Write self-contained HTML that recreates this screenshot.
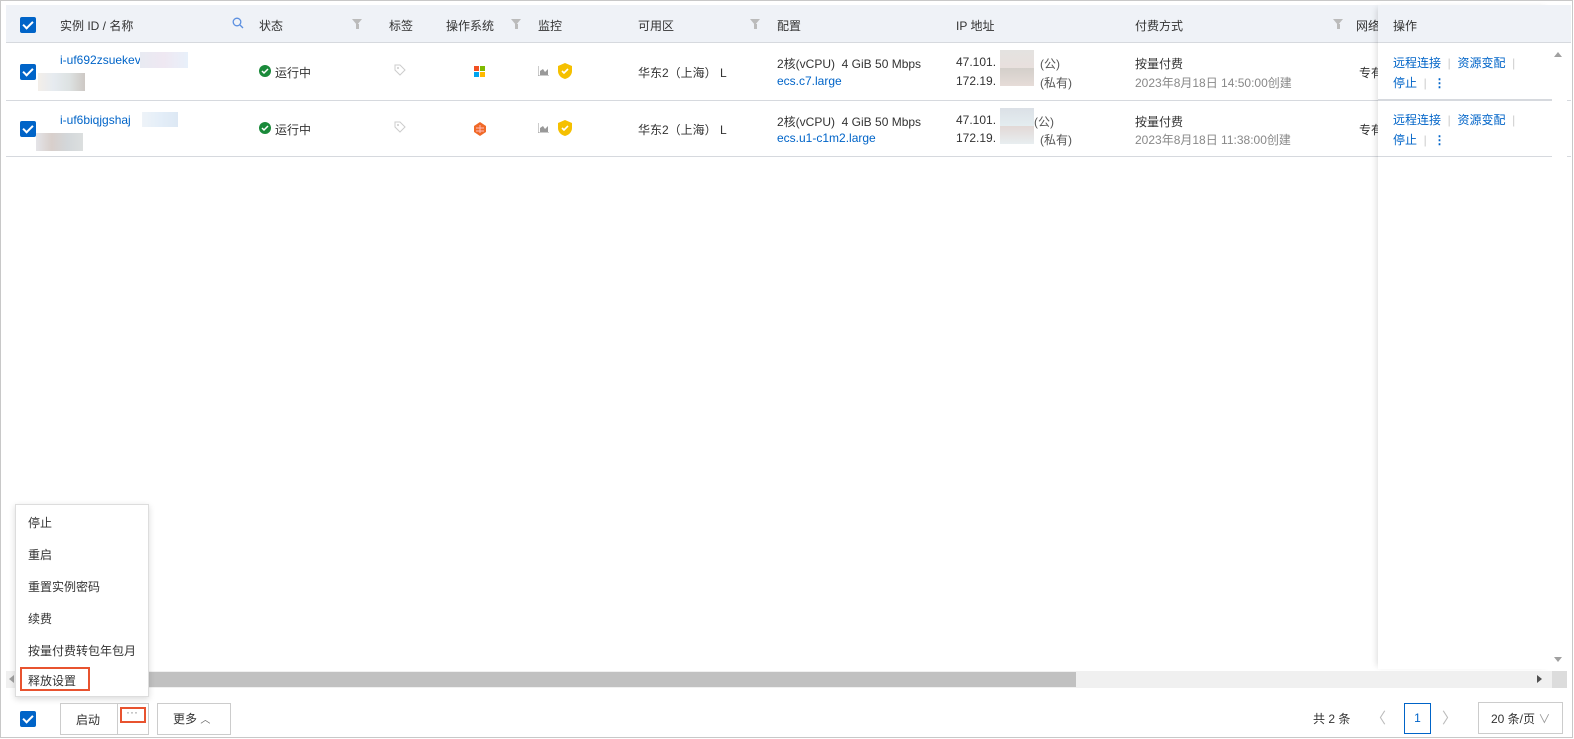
<!DOCTYPE html>
<html><head><meta charset="utf-8"><style>
*{box-sizing:border-box;margin:0;padding:0}
body{width:1574px;height:739px;background:#fff;font-family:"Liberation Sans","Noto Sans CJK SC",sans-serif;font-size:12px;color:#333;position:relative;overflow:hidden}
.a{position:absolute;white-space:nowrap}
.frame{position:absolute;left:0;top:0;width:1573px;height:738px;border:1px solid #c8c8c8}
.cb{position:absolute;width:16px;height:16px;background:#0064c8;border-radius:2px}
.cb:after{content:"";position:absolute;left:5px;top:2px;width:4px;height:8px;border:solid #fff;border-width:0 2px 2px 0;transform:rotate(45deg)}
.hd{color:#333;font-size:12px}
.link{color:#0064c8}
.gray{color:#888}
.flt{position:absolute;width:0;height:0;border-left:5px solid transparent;border-right:5px solid transparent;border-top:6px solid #bbb}
.flt:after{content:"";position:absolute;left:-1.5px;top:-1px;width:3px;height:5px;background:#bbb}
.blur{position:absolute}
</style></head><body>
<div class="frame"></div>
<!-- header -->
<div class="a" style="left:6px;top:5px;width:1565px;height:38px;background:#eff2f7;border-bottom:1px solid #d6d9de"></div>
<div class="cb" style="left:20px;top:17px"></div>
<div class="a hd" style="left:60px;top:17px">实例 ID / 名称</div>
<svg class="a" style="left:232px;top:17px" width="12" height="12" viewBox="0 0 12 12"><circle cx="5" cy="5" r="3.8" fill="none" stroke="#5b8fe0" stroke-width="1.3"/><path d="M8 8l3 3" stroke="#5b8fe0" stroke-width="1.3"/></svg>
<div class="a hd" style="left:259px;top:17px">状态</div>
<div class="flt" style="left:352px;top:19px"></div>
<div class="a hd" style="left:389px;top:17px">标签</div>
<div class="a hd" style="left:446px;top:17px">操作系统</div>
<div class="flt" style="left:511px;top:19px"></div>
<div class="a hd" style="left:538px;top:17px">监控</div>
<div class="a hd" style="left:638px;top:17px">可用区</div>
<div class="flt" style="left:750px;top:19px"></div>
<div class="a hd" style="left:777px;top:17px">配置</div>
<div class="a hd" style="left:956px;top:17px">IP 地址</div>
<div class="a hd" style="left:1135px;top:17px">付费方式</div>
<div class="flt" style="left:1333px;top:19px"></div>
<div class="a hd" style="left:1356px;top:17px">网络</div>
<!-- rows -->
<div class="a" style="left:6px;top:100px;width:1565px;height:1px;background:#d6d9de"></div>
<div class="a" style="left:6px;top:156px;width:1565px;height:1px;background:#d6d9de"></div>

<div class="cb" style="left:20px;top:64px"></div>
<div class="a link" style="left:60px;top:53px">i-uf692zsuekev</div>
<div class="blur" style="left:140px;top:52px;width:48px;height:16px;background:linear-gradient(90deg,#e8eaf2,#efe8f2,#e8f0fa)"></div>
<div class="blur" style="left:38px;top:73px;width:47px;height:18px;background:linear-gradient(90deg,#f3eee9,#e6ebf0,#dde2e2,#cdc8c4)"></div>
<svg class="a" style="left:259px;top:65px" width="12" height="12"><circle cx="6" cy="6" r="6" fill="#1a8a3a"/><path d="M3 6l2 2 4-4" stroke="#fff" stroke-width="1.5" fill="none"/></svg>
<div class="a" style="left:275px;top:64px">运行中</div>
<svg class="a" style="left:394px;top:64px" width="12" height="12"><path d="M1 1h5l5 5-5 5-5-5z" fill="none" stroke="#ccc"/><circle cx="4" cy="4" r="1" fill="#ccc"/></svg>
<svg class="a" style="left:474px;top:66px" width="11" height="11"><rect width="5" height="5" fill="#f25022"/><rect x="6" width="5" height="5" fill="#7fba00"/><rect y="6" width="5" height="5" fill="#00a4ef"/><rect x="6" y="6" width="5" height="5" fill="#ffb900"/></svg>
<svg class="a" style="left:538px;top:66px" width="11" height="10"><path d="M0 0v10h11" stroke="#999" fill="none"/><path d="M2 9V5l3-2 2 3 3-3v6z" fill="#999"/></svg>
<svg class="a" style="left:558px;top:63px" width="14" height="16"><path d="M7 0l7 3v5c0 4-3 7-7 8-4-1-7-4-7-8V3z" fill="#f5c000"/><path d="M4 8l2 2 4-4" stroke="#fff" stroke-width="1.6" fill="none"/></svg>
<div class="a" style="left:638px;top:64px">华东2（上海） L</div>
<div class="a" style="left:777px;top:55px">2核(vCPU)&nbsp; 4 GiB 50 Mbps</div>
<div class="a link" style="left:777px;top:74px">ecs.c7.large</div>
<div class="a" style="left:956px;top:55px">47.101.</div>
<div class="a" style="left:956px;top:74px">172.19.</div>
<div class="blur" style="left:1000px;top:50px;width:34px;height:36px;background:linear-gradient(#e4e2e0,#e8e0dd 50%,#d3cfca 50%,#e6dcd8)"></div>
<div class="a gray" style="left:1040px;top:55px;color:#555">(公)</div>
<div class="a gray" style="left:1040px;top:74px;color:#555">(私有)</div>
<div class="a" style="left:1135px;top:55px">按量付费</div>
<div class="a gray" style="left:1135px;top:74px">2023年8月18日 14:50:00创建</div>
<div class="a" style="left:1359px;top:64px">专有</div>

<div class="cb" style="left:20px;top:121px"></div>
<div class="a link" style="left:60px;top:113px">i-uf6biqjgshaj</div>
<div class="blur" style="left:142px;top:112px;width:36px;height:15px;background:linear-gradient(90deg,#eef3f8,#e4eef8,#dde8f4)"></div>
<div class="blur" style="left:36px;top:133px;width:47px;height:18px;background:linear-gradient(90deg,#e4e4e8,#d8cfcb,#d3d7da,#dcdfdf)"></div>
<svg class="a" style="left:259px;top:122px" width="12" height="12"><circle cx="6" cy="6" r="6" fill="#1a8a3a"/><path d="M3 6l2 2 4-4" stroke="#fff" stroke-width="1.5" fill="none"/></svg>
<div class="a" style="left:275px;top:121px">运行中</div>
<svg class="a" style="left:394px;top:121px" width="12" height="12"><path d="M1 1h5l5 5-5 5-5-5z" fill="none" stroke="#ccc"/><circle cx="4" cy="4" r="1" fill="#ccc"/></svg>
<svg class="a" style="left:473px;top:122px" width="14" height="14"><path d="M7 0l6 4v6l-6 4-6-4V4z" fill="#f06a28"/><path d="M3 6h8M3 9h8M7 3v8" stroke="#fbb" stroke-width="1"/></svg>
<svg class="a" style="left:538px;top:123px" width="11" height="10"><path d="M0 0v10h11" stroke="#999" fill="none"/><path d="M2 9V5l3-2 2 3 3-3v6z" fill="#999"/></svg>
<svg class="a" style="left:558px;top:120px" width="14" height="16"><path d="M7 0l7 3v5c0 4-3 7-7 8-4-1-7-4-7-8V3z" fill="#f5c000"/><path d="M4 8l2 2 4-4" stroke="#fff" stroke-width="1.6" fill="none"/></svg>
<div class="a" style="left:638px;top:121px">华东2（上海） L</div>
<div class="a" style="left:777px;top:113px">2核(vCPU)&nbsp; 4 GiB 50 Mbps</div>
<div class="a link" style="left:777px;top:131px">ecs.u1-c1m2.large</div>
<div class="a" style="left:956px;top:113px">47.101.</div>
<div class="a" style="left:956px;top:131px">172.19.</div>
<div class="blur" style="left:1000px;top:108px;width:34px;height:36px;background:linear-gradient(#dbe0e6,#e4edf0 50%,#e2d8d6 50%,#e8eef0)"></div>
<div class="a" style="left:1034px;top:113px;color:#555">(公)</div>
<div class="a" style="left:1040px;top:131px;color:#555">(私有)</div>
<div class="a" style="left:1135px;top:113px">按量付费</div>
<div class="a gray" style="left:1135px;top:131px">2023年8月18日 11:38:00创建</div>
<div class="a" style="left:1359px;top:121px">专有</div>

<!-- fixed action column -->
<div class="a" style="left:1378px;top:5px;width:174px;height:664px;background:transparent;box-shadow:-4px 0 6px -3px rgba(0,0,0,.15)"></div>
<div class="a" style="left:1378px;top:5px;width:174px;height:38px;background:#eff2f7;border-bottom:1px solid #d6d9de"></div>
<div class="a hd" style="left:1393px;top:17px">操作</div>
<div class="a" style="left:1378px;top:43px;width:174px;height:57px;background:#fff;border-bottom:1px solid #d6d9de"></div>
<div class="a" style="left:1378px;top:101px;width:174px;height:56px;background:#fff;border-bottom:1px solid #d6d9de"></div>
<div class="a link" style="left:1393px;top:54px">远程连接 <span style="color:#ccc">&nbsp;|&nbsp;</span> 资源变配 <span style="color:#ccc">&nbsp;|</span></div>
<div class="a link" style="left:1393px;top:74px">停止 <span style="color:#ccc">&nbsp;|&nbsp;</span> <b>⋮</b></div>
<div class="a link" style="left:1393px;top:111px">远程连接 <span style="color:#ccc">&nbsp;|&nbsp;</span> 资源变配 <span style="color:#ccc">&nbsp;|</span></div>
<div class="a link" style="left:1393px;top:131px">停止 <span style="color:#ccc">&nbsp;|&nbsp;</span> <b>⋮</b></div>

<!-- scrollbars -->
<div class="a" style="left:1552px;top:43px;width:15px;height:628px;background:#fff"></div>
<div class="a" style="left:1554px;top:52px;width:0;height:0;border:4px solid transparent;border-bottom:5px solid #a0a0a0;border-top:0"></div>
<div class="a" style="left:1554px;top:657px;width:0;height:0;border:4px solid transparent;border-top:5px solid #a0a0a0;border-bottom:0"></div>
<div class="a" style="left:6px;top:671px;width:1561px;height:17px;background:#f0f0f0"></div>
<div class="a" style="left:1552px;top:671px;width:15px;height:17px;background:#dcdcdc"></div>
<div class="a" style="left:16px;top:672px;width:1060px;height:15px;background:#c1c1c1"></div>
<div class="a" style="left:9px;top:675px;width:0;height:0;border:4px solid transparent;border-right:5px solid #a0a0a0;border-left:0"></div>
<div class="a" style="left:1537px;top:675px;width:0;height:0;border:4px solid transparent;border-left:5px solid #505050;border-right:0"></div>

<!-- dropdown -->
<div class="a" style="left:15px;top:504px;width:134px;height:193px;background:#fff;border:1px solid #ddd;box-shadow:0 2px 6px rgba(0,0,0,.15)"></div>
<div class="a" style="left:28px;top:514px">停止</div>
<div class="a" style="left:28px;top:546px">重启</div>
<div class="a" style="left:28px;top:578px">重置实例密码</div>
<div class="a" style="left:28px;top:610px">续费</div>
<div class="a" style="left:28px;top:642px">按量付费转包年包月</div>
<div class="a" style="left:20px;top:667px;width:70px;height:24px;border:2px solid #e8532f"></div>
<div class="a" style="left:28px;top:672px">释放设置</div>

<!-- bottom bar -->
<div class="cb" style="left:20px;top:711px"></div>
<div class="a" style="left:60px;top:703px;width:89px;height:32px;border:1px solid #ccc"></div>
<div class="a" style="left:117px;top:703px;width:1px;height:32px;background:#ccc"></div>
<div class="a" style="left:76px;top:711px">启动</div>
<div class="a" style="left:120px;top:707px;width:26px;height:16px;border:2px solid #e8532f"></div>
<div class="a" style="left:126px;top:705px;color:#888">···</div>
<div class="a" style="left:157px;top:703px;width:74px;height:32px;border:1px solid #ccc"></div>
<div class="a" style="left:173px;top:710px">更多 <span style="font-size:10px;color:#666">︿</span></div>

<div class="a" style="left:1313px;top:710px">共 2 条</div>
<div class="a" style="left:1371px;top:707px;color:#bbb;font-size:15px">〈</div>
<div class="a" style="left:1404px;top:703px;width:27px;height:31px;border:1px solid #0064c8;color:#0064c8;text-align:center;line-height:29px">1</div>
<div class="a" style="left:1442px;top:707px;color:#bbb;font-size:15px">〉</div>
<div class="a" style="left:1478px;top:702px;width:85px;height:32px;border:1px solid #ccc"></div>
<div class="a" style="left:1491px;top:710px">20 条/页 <span style="color:#999">∨</span></div>
</body></html>
